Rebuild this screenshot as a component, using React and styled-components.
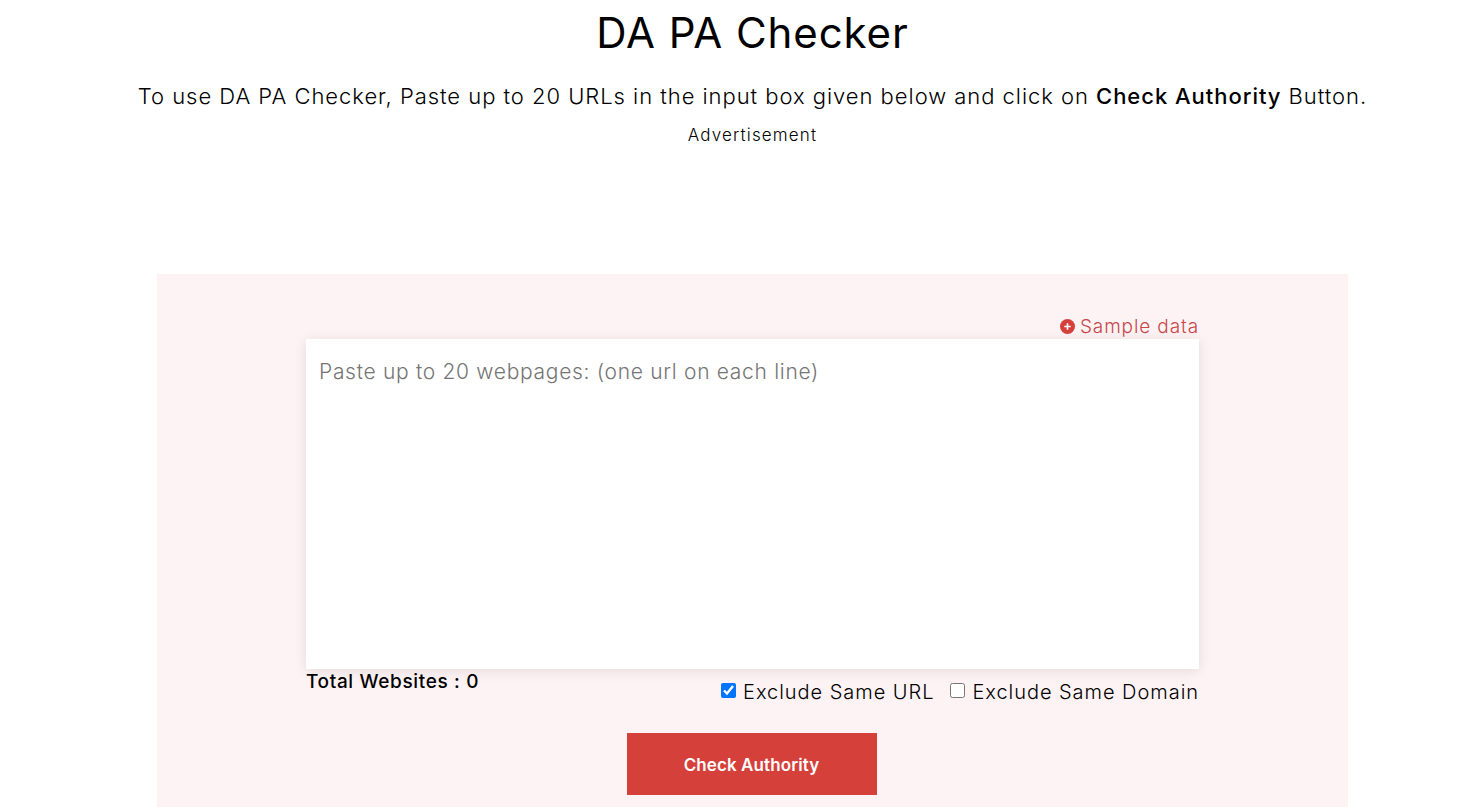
import React from "react";
import styled, { createGlobalStyle } from "styled-components";

const GlobalStyle = createGlobalStyle`
  html, body {
    margin: 0;
    padding: 0;
    background: #fff;
    overflow: hidden;
    font-family: Inter, "Open Sans", sans-serif;
    color: #000;
  }
  * { box-sizing: border-box; }
`;

export default function App() {
  return (
    <Page>
      <GlobalStyle />
      <Title>DA PA Checker</Title>
      <Intro>
        To use DA PA Checker, Paste up to 20 URLs in the input box given below and click on{" "}
        <strong>Check Authority</strong> Button.
      </Intro>
      <AdLabel>Advertisement</AdLabel>
      <Panel>
        <Inner>
          <SampleRow>
            <SampleLink href="#">
              <svg width="15" height="15" viewBox="0 0 15 15" aria-hidden="true">
                <circle cx="7.5" cy="7.5" r="7.5" fill="#d5403a" />
                <path d="M7.5 4.3v6.4M4.3 7.5h6.4" stroke="#fff" strokeWidth="1.7" />
              </svg>
              Sample data
            </SampleLink>
          </SampleRow>
          <UrlBox placeholder="Paste up to 20 webpages: (one url on each line)" />
          <OptionsRow>
            <Total>Total Websites : 0</Total>
            <Options>
              <Option>
                <Check type="checkbox" defaultChecked />
                Exclude Same URL
              </Option>
              <Option>
                <Check type="checkbox" />
                Exclude Same Domain
              </Option>
            </Options>
          </OptionsRow>
          <ButtonRow>
            <CheckButton>Check Authority</CheckButton>
          </ButtonRow>
        </Inner>
      </Panel>
    </Page>
  );
}

const Page = styled.div`
  width: 1505px;
  height: 807px;
  overflow: hidden;
  display: flex;
  flex-direction: column;
  align-items: center;
`;

const Title = styled.h1`
  margin: 9px 0 0;
  font-size: 42px;
  line-height: 48px;
  font-weight: 400;
  letter-spacing: 0.9px;
`;

const Intro = styled.p`
  margin: 21px 0 0;
  font-size: 22px;
  line-height: 36px;
  font-weight: 300;
  letter-spacing: 0.96px;

  strong {
    font-weight: 500;
  }
`;

const AdLabel = styled.div`
  margin-top: 10px;
  font-size: 17px;
  line-height: 22px;
  font-weight: 300;
  letter-spacing: 1.15px;
`;

const Panel = styled.section`
  margin-top: 128px;
  width: 1191px;
  flex: 1;
  background: #fdf3f4;
  display: flex;
  justify-content: center;
`;

const Inner = styled.div`
  width: 893px;
  padding-top: 40px;
`;

const SampleRow = styled.div`
  display: flex;
  justify-content: flex-end;
  height: 25px;
`;

const SampleLink = styled.a`
  display: flex;
  align-items: center;
  gap: 5px;
  height: 25px;
  font-size: 19px;
  font-weight: 300;
  letter-spacing: 0.88px;
  color: #c9474a;
  text-decoration: none;
`;

const UrlBox = styled.textarea`
  display: block;
  width: 100%;
  height: 330px;
  border: 0;
  outline: 0;
  resize: none;
  padding: 20px 13px;
  background: #fff;
  box-shadow: 0 2px 12px rgba(0, 0, 0, 0.1);
  font-family: inherit;
  font-size: 21px;
  line-height: 26px;
  font-weight: 300;
  letter-spacing: 0.7px;

  &::placeholder {
    color: #757575;
    opacity: 1;
  }
`;

const OptionsRow = styled.div`
  display: flex;
  justify-content: space-between;
  align-items: flex-start;
`;

const Total = styled.div`
  margin-top: 1px;
  font-size: 19px;
  line-height: 24px;
  font-weight: 500;
  letter-spacing: 0.65px;
`;

const Options = styled.div`
  display: flex;
  gap: 16px;
  margin-top: 11px;
`;

const Option = styled.label`
  display: flex;
  align-items: center;
  gap: 7px;
  font-size: 20px;
  line-height: 24px;
  font-weight: 300;
  letter-spacing: 0.96px;
`;

const Check = styled.input`
  width: 15px;
  height: 15px;
  margin: -3px 0 0;
  accent-color: #0075ff;
`;

const ButtonRow = styled.div`
  display: flex;
  justify-content: center;
  margin-top: 29px;
  padding-right: 2px;
`;

const CheckButton = styled.button`
  width: 250px;
  height: 62px;
  border: 0;
  padding: 1px 0 0;
  background: #d5403a;
  color: #fff;
  font-family: inherit;
  font-size: 17px;
  font-weight: 600;
  letter-spacing: 0.1px;
`;
